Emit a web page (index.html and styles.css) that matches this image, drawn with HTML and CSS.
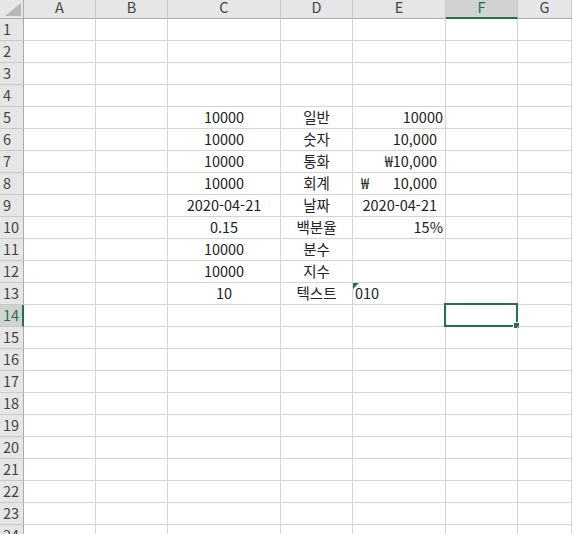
FILE: index.html
```html
<!DOCTYPE html>
<html lang="ko">
<head>
<meta charset="utf-8">
<link rel="stylesheet" href="styles.css">
</head>
<body>
<div class="sheet">
  <div class="row head">
    <div class="corner"><svg width="23" height="18" viewBox="0 0 23 18"><polygon points="5,16 21,16 21,3" fill="#b7b7b7"/></svg></div>
    <div class="ch">A</div><div class="ch">B</div><div class="ch">C</div><div class="ch">D</div><div class="ch">E</div><div class="ch sel">F</div><div class="ch">G</div>
  </div>
  <div class="row"><div class="rh">1</div><div class="c"></div><div class="c"></div><div class="c"></div><div class="c"></div><div class="c"></div><div class="c"></div><div class="c"></div></div>
  <div class="row"><div class="rh">2</div><div class="c"></div><div class="c"></div><div class="c"></div><div class="c"></div><div class="c"></div><div class="c"></div><div class="c"></div></div>
  <div class="row"><div class="rh">3</div><div class="c"></div><div class="c"></div><div class="c"></div><div class="c"></div><div class="c"></div><div class="c"></div><div class="c"></div></div>
  <div class="row"><div class="rh">4</div><div class="c"></div><div class="c"></div><div class="c"></div><div class="c"></div><div class="c"></div><div class="c"></div><div class="c"></div></div>
  <div class="row"><div class="rh">5</div><div class="c"></div><div class="c"></div><div class="c ctr">10000</div><div class="c ctr">일반</div><div class="c num">10000</div><div class="c"></div><div class="c"></div></div>
  <div class="row"><div class="rh">6</div><div class="c"></div><div class="c"></div><div class="c ctr">10000</div><div class="c ctr">숫자</div><div class="c num fmt">10,000</div><div class="c"></div><div class="c"></div></div>
  <div class="row"><div class="rh">7</div><div class="c"></div><div class="c"></div><div class="c ctr">10000</div><div class="c ctr">통화</div><div class="c num fmt">₩10,000</div><div class="c"></div><div class="c"></div></div>
  <div class="row"><div class="rh">8</div><div class="c"></div><div class="c"></div><div class="c ctr">10000</div><div class="c ctr">회계</div><div class="c acct"><span>₩</span><span>10,000</span></div><div class="c"></div><div class="c"></div></div>
  <div class="row"><div class="rh">9</div><div class="c"></div><div class="c"></div><div class="c ctr">2020-04-21</div><div class="c ctr">날짜</div><div class="c num fmt">2020-04-21</div><div class="c"></div><div class="c"></div></div>
  <div class="row"><div class="rh">10</div><div class="c"></div><div class="c"></div><div class="c ctr">0.15</div><div class="c ctr">백분율</div><div class="c num">15%</div><div class="c"></div><div class="c"></div></div>
  <div class="row"><div class="rh">11</div><div class="c"></div><div class="c"></div><div class="c ctr">10000</div><div class="c ctr">분수</div><div class="c"></div><div class="c"></div><div class="c"></div></div>
  <div class="row"><div class="rh">12</div><div class="c"></div><div class="c"></div><div class="c ctr">10000</div><div class="c ctr">지수</div><div class="c"></div><div class="c"></div><div class="c"></div></div>
  <div class="row"><div class="rh">13</div><div class="c"></div><div class="c"></div><div class="c ctr">10</div><div class="c ctr">텍스트</div><div class="c txt"><span class="flag"></span>010</div><div class="c"></div><div class="c"></div></div>
  <div class="row"><div class="rh sel">14</div><div class="c"></div><div class="c"></div><div class="c"></div><div class="c"></div><div class="c"></div><div class="c active"><span class="selbox"><span class="handle"></span></span></div><div class="c"></div></div>
  <div class="row"><div class="rh">15</div><div class="c"></div><div class="c"></div><div class="c"></div><div class="c"></div><div class="c"></div><div class="c"></div><div class="c"></div></div>
  <div class="row"><div class="rh">16</div><div class="c"></div><div class="c"></div><div class="c"></div><div class="c"></div><div class="c"></div><div class="c"></div><div class="c"></div></div>
  <div class="row"><div class="rh">17</div><div class="c"></div><div class="c"></div><div class="c"></div><div class="c"></div><div class="c"></div><div class="c"></div><div class="c"></div></div>
  <div class="row"><div class="rh">18</div><div class="c"></div><div class="c"></div><div class="c"></div><div class="c"></div><div class="c"></div><div class="c"></div><div class="c"></div></div>
  <div class="row"><div class="rh">19</div><div class="c"></div><div class="c"></div><div class="c"></div><div class="c"></div><div class="c"></div><div class="c"></div><div class="c"></div></div>
  <div class="row"><div class="rh">20</div><div class="c"></div><div class="c"></div><div class="c"></div><div class="c"></div><div class="c"></div><div class="c"></div><div class="c"></div></div>
  <div class="row"><div class="rh">21</div><div class="c"></div><div class="c"></div><div class="c"></div><div class="c"></div><div class="c"></div><div class="c"></div><div class="c"></div></div>
  <div class="row"><div class="rh">22</div><div class="c"></div><div class="c"></div><div class="c"></div><div class="c"></div><div class="c"></div><div class="c"></div><div class="c"></div></div>
  <div class="row"><div class="rh">23</div><div class="c"></div><div class="c"></div><div class="c"></div><div class="c"></div><div class="c"></div><div class="c"></div><div class="c"></div></div>
  <div class="row"><div class="rh">24</div><div class="c"></div><div class="c"></div><div class="c"></div><div class="c"></div><div class="c"></div><div class="c"></div><div class="c"></div></div>
</div>
</body>
</html>
```

FILE: styles.css
```css
html, body {
  margin: 0;
  padding: 0;
  background: #ffffff;
  overflow: hidden;
  width: 572px;
  height: 534px;
}
.sheet {
  font-family: "Noto Sans CJK KR", "Noto Sans", sans-serif;
  font-size: 14.5px;
  color: #222222;
  width: 572px;
}
.row {
  display: grid;
  grid-template-columns: 24px 72px 72px 113px 72px 93px 72px 1fr;
  height: 22px;
}
.row.head {
  height: 19px;
}
.corner, .ch, .rh {
  background: #e6e6e6;
  color: #444444;
  box-sizing: border-box;
}
.corner {
  border-right: 1px solid #ababab;
  border-bottom: 1px solid #ababab;
}
.corner svg { display: block; }
.ch {
  border-right: 1px solid #c9c9c9;
  border-bottom: 1px solid #ababab;
  text-align: center;
  line-height: 14px;
}
.ch.sel {
  background: #d2d2d2;
  color: #217346;
  border-bottom: 2px solid #217346;
}
.rh {
  border-right: 1px solid #ababab;
  border-bottom: 1px solid #c9c9c9;
  padding-left: 3px;
  line-height: 20px;
}
.rh.sel {
  background: #d2d2d2;
  color: #217346;
  border-right: 2px solid #217346;
}
.c {
  box-sizing: border-box;
  border-right: 1px solid #d4d4d4;
  border-bottom: 1px solid #d4d4d4;
  line-height: 20px;
  white-space: nowrap;
  position: relative;
}
.ctr { text-align: center; }
.num { text-align: right; padding-right: 2px; }
.num.fmt { padding-right: 8px; }
.acct {
  display: flex;
  justify-content: space-between;
  padding-left: 8px;
  padding-right: 8px;
}
.txt { padding-left: 2px; }
.flag {
  position: absolute;
  left: 0;
  top: 0;
  width: 6px;
  height: 6px;
  background: #217346;
  clip-path: polygon(0 0, 100% 0, 0 100%);
}
.selbox {
  position: absolute;
  left: -2px;
  top: -2px;
  right: -1px;
  bottom: -1px;
  border: 2px solid #217346;
}
.handle {
  position: absolute;
  right: -4px;
  bottom: -4px;
  width: 5px;
  height: 5px;
  background: #217346;
  border: 1px solid #ffffff;
}
```
